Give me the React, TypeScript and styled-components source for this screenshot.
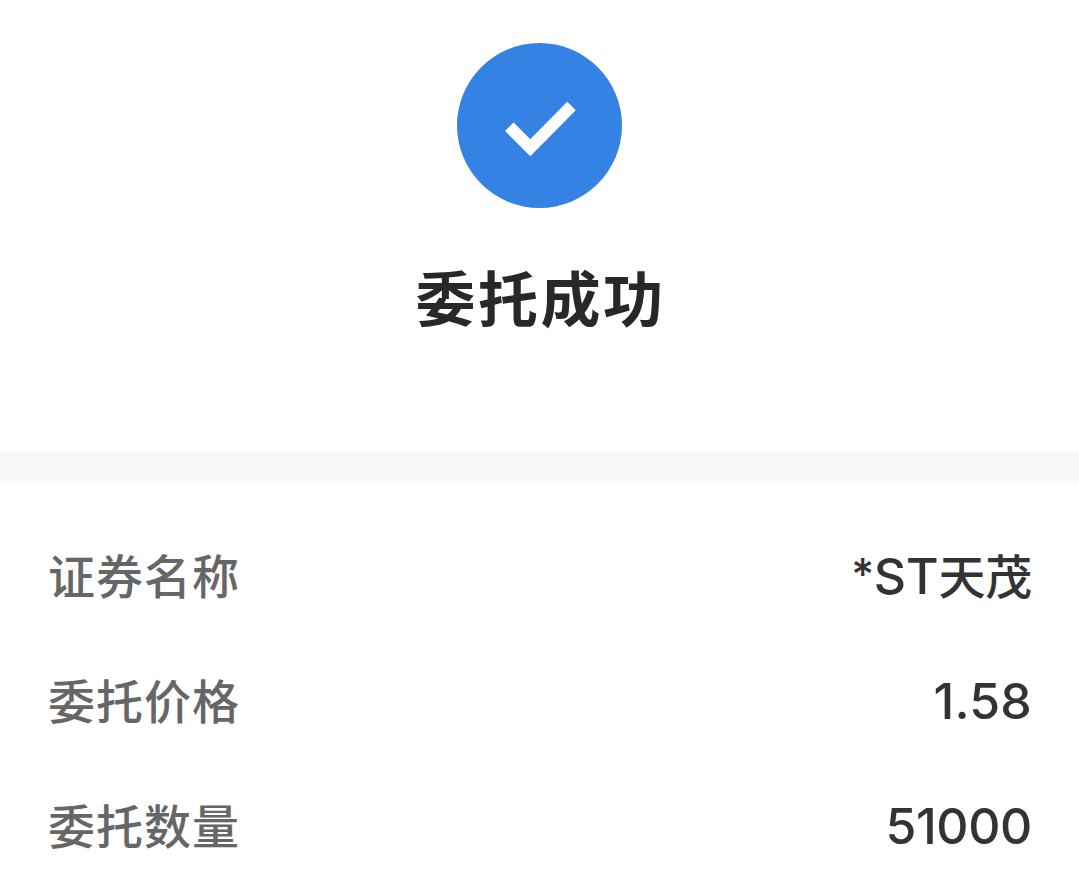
import React from 'react'
import styled, { createGlobalStyle } from 'styled-components'

const GlobalStyle = createGlobalStyle`
  body {
    margin: 0;
    background: #fff;
    font-family: Inter, 'Noto Sans CJK SC', sans-serif;
  }
`

const S = {
  Page: styled.div`
    height: 889px;
    overflow: hidden;
    background: #fff;
  `,

  Result: styled.div`
    display: flex;
    flex-direction: column;
    align-items: center;
    box-sizing: border-box;
    height: 451px;
    padding-top: 43px;

    h1 {
      margin: 46px 0 0;
      padding-left: 2px;
      font-size: 60px;
      font-weight: 700;
      line-height: 92px;
      letter-spacing: 2.5px;
      color: #282828;
    }
  `,

  Badge: styled.div`
    width: 165px;
    height: 165px;
    border-radius: 50%;
    background: #3482e3;

    svg {
      display: block;
    }
  `,

  Divider: styled.div`
    height: 30px;
    background: #f6f8fa;
  `,

  List: styled.div`
    padding: 33px 48px 0;
  `,

  Row: styled.div`
    display: flex;
    align-items: center;
    justify-content: space-between;
    height: 125px;
    font-size: 47px;
    font-weight: 500;
    line-height: 72px;
  `,

  Label: styled.span`
    letter-spacing: 1px;
    color: #666;
  `,

  Value: styled.span<{ $spacing?: number }>`
    margin-right: -1px;
    letter-spacing: ${({ $spacing = 0 }) => $spacing}px;
    color: #333;
  `,

  Mark: styled.span`
    font-size: 44px;
    line-height: 1;
    vertical-align: 4px;
  `,

  Latin: styled.span`
    font-size: 50px;
  `,
}

const details = [
  {
    label: '证券名称',
    value: <><S.Mark>*</S.Mark><S.Latin>ST</S.Latin>天茂</>,
    spacing: -0.2,
  },
  { label: '委托价格', value: <S.Latin>1.58</S.Latin>, spacing: 0.2 },
  { label: '委托数量', value: <S.Latin>51000</S.Latin>, spacing: -0.4 },
]

const App = () => (
  <S.Page>
    <GlobalStyle />
    <S.Result>
      <S.Badge>
        <svg width="165" height="165" viewBox="0 0 165 165" fill="none">
          <path d="M52.300 83.700L73.300 104.700L114.500 63" stroke="#fff" strokeWidth="12" />
        </svg>
      </S.Badge>
      <h1>委托成功</h1>
    </S.Result>
    <S.Divider />
    <S.List>
      {details.map(({ label, value, spacing }) => (
        <S.Row key={label}>
          <S.Label>{label}</S.Label>
          <S.Value $spacing={spacing}>{value}</S.Value>
        </S.Row>
      ))}
    </S.List>
  </S.Page>
)

export default App
